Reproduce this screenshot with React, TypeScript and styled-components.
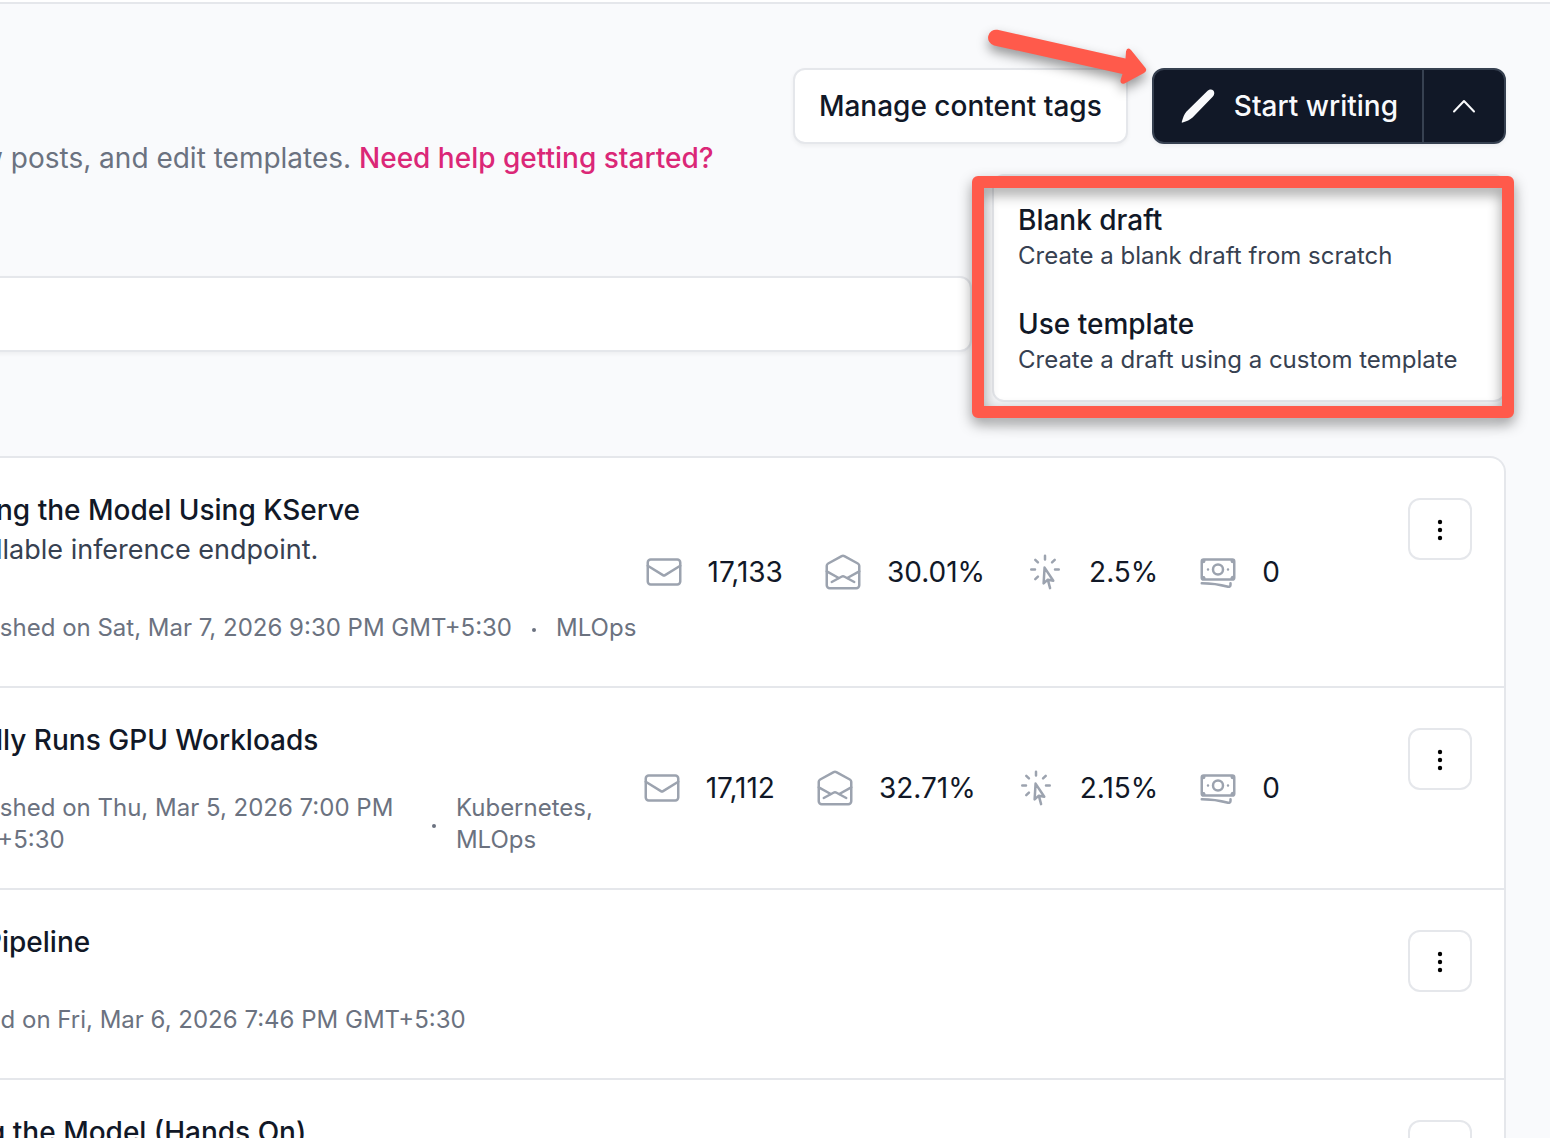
import React from "react";
import styled, { createGlobalStyle } from "styled-components";

const color = {
  canvas: "#f9fafc",
  surface: "#ffffff",
  line: "#e5e7eb",
  ink: "#111827",
  body: "#374151",
  muted: "#6b7280",
  icon: "#9ca3af",
  pink: "#db2777",
  marker: "#ff5a4b",
};

const GlobalStyle = createGlobalStyle`
  *, *::before, *::after { box-sizing: border-box; }
  body {
    margin: 0;
    background: ${color.canvas};
    color: ${color.ink};
    font-family: Inter, "Liberation Sans", sans-serif;
    font-size: 28px;
    line-height: 40px;
    -webkit-font-smoothing: antialiased;
  }
  button, input { font: inherit; color: inherit; }
`;

const Page = styled.div`
  height: 100vh;
  overflow: hidden;
`;

const TopBar = styled.div`
  height: 4px;
  background: ${color.surface};
  border-bottom: 2px solid ${color.line};
`;

const Main = styled.main`
  padding: 64px 44px 0 0;
`;

const Header = styled.header`
  display: flex;
  justify-content: space-between;
  align-items: flex-end;
`;

const Intro = styled.p<{ $cut: number }>`
  margin: 70px 0 0 -${(p) => p.$cut}px;
  color: ${color.muted};
  white-space: nowrap;
`;

const HelpLink = styled.a`
  color: ${color.pink};
  font-weight: 500;
  text-decoration: none;
`;

const Actions = styled.div`
  display: flex;
  align-self: flex-start;
  gap: 24px;
`;

const TagsButton = styled.button`
  height: 76px;
  padding: 0 24px;
  border: 2px solid ${color.line};
  border-radius: 12px;
  background: ${color.surface};
  font-weight: 500;
  white-space: nowrap;
  box-shadow: 0 2px 4px rgba(0, 0, 0, 0.05);
`;

const SplitButton = styled.div`
  position: relative;
  display: flex;
  height: 76px;
  border: 2px solid ${color.body};
  border-radius: 12px;
  background: ${color.ink};
  color: ${color.canvas};
  box-shadow: 0 2px 4px rgba(0, 0, 0, 0.05);
`;

const WriteButton = styled.button`
  display: flex;
  align-items: center;
  gap: 16px;
  padding: 0 24px;
  border: 0;
  background: transparent;
  font-weight: 500;
  white-space: nowrap;
`;

const ToggleButton = styled.button`
  display: flex;
  align-items: center;
  justify-content: center;
  width: 82px;
  padding: 0;
  border: 0;
  border-left: 2px solid ${color.body};
  background: transparent;
`;

const Menu = styled.div`
  position: absolute;
  z-index: 1;
  top: 104px;
  right: -2px;
  width: 514px;
  padding: 8px 0;
  border: 2px solid ${color.line};
  border-radius: 12px;
  background: ${color.surface};
  box-shadow: 0 16px 32px rgba(0, 0, 0, 0.04);
`;

const MenuItem = styled.button`
  display: block;
  width: 100%;
  padding: 16px 24px;
  border: 0;
  background: transparent;
  color: ${color.ink};
  text-align: left;
`;

const MenuTitle = styled.span`
  display: block;
  font-weight: 500;
`;

const MenuText = styled.span`
  display: block;
  color: ${color.body};
  font-size: 24px;
  line-height: 32px;
  white-space: nowrap;
`;

const Frame = styled.div`
  position: absolute;
  z-index: 2;
  top: 106px;
  right: -10px;
  width: 542px;
  height: 242px;
  border: 12px solid ${color.marker};
  border-radius: 6px;
  filter: drop-shadow(0 6px 7px rgba(0, 0, 0, 0.4));
  pointer-events: none;
`;

const Arrow = styled.svg`
  position: absolute;
  z-index: 2;
  top: -50px;
  left: -174px;
  overflow: visible;
  filter: drop-shadow(0 6px 6px rgba(0, 0, 0, 0.4));
  pointer-events: none;
`;

const Filters = styled.div`
  display: grid;
  grid-template-columns: minmax(0, 1fr) 510px;
  gap: 24px;
  margin: 98px 0 104px -16px;
`;

const Search = styled.input`
  width: 100%;
  height: 76px;
  padding: 0 24px;
  border: 2px solid ${color.line};
  border-radius: 12px;
  background: ${color.surface};
  box-shadow: 0 2px 4px rgba(0, 0, 0, 0.05);
`;

const PostList = styled.section`
  border: 2px solid ${color.line};
  border-left: 0;
  border-radius: 0 16px 0 0;
  background: ${color.surface};
`;

const Row = styled.article`
  display: flex;
  align-items: center;
  padding: 32px 32px 32px 0;
  border-bottom: 2px solid ${color.line};
`;

const Content = styled.div`
  flex: 1 1 0;
  min-width: 0;
`;

const Title = styled.h2<{ $cut: number }>`
  margin: 0 0 0 -${(p) => p.$cut}px;
  font-size: 28px;
  font-weight: 500;
  line-height: 40px;
  white-space: nowrap;
`;

const Subtitle = styled.p`
  margin: 0 0 0 -4px;
  color: ${color.body};
  font-size: 27px;
  white-space: nowrap;
`;

const Meta = styled.div`
  display: flex;
  align-items: center;
  gap: 20px;
  min-height: 52px;
  margin: 32px 0 0 -56px;
  color: ${color.muted};
  font-size: 24px;
  line-height: 32px;
`;

const Dot = styled.span`
  flex: none;
  width: 4px;
  height: 4px;
  margin-top: 4px;
  border-radius: 50%;
  background: ${color.muted};
`;

const Stats = styled.ul`
  display: flex;
  flex: none;
  gap: 40px;
  margin: 0 128px 0 4px;
  padding: 0;
  list-style: none;
`;

const Stat = styled.li`
  display: flex;
  align-items: center;
  gap: 24px;
`;

const MoreButton = styled.button`
  display: flex;
  flex: none;
  align-items: center;
  justify-content: center;
  align-self: flex-start;
  width: 64px;
  height: 62px;
  margin: 8px 0 0;
  padding: 0;
  border: 2px solid ${color.line};
  border-radius: 12px;
  background: ${color.surface};
`;

const iconPaths = {
  sent: [
    "M4 4.5h16a1.75 1.75 0 0 1 1.75 1.75v11.5A1.75 1.75 0 0 1 20 19.5H4a1.75 1.75 0 0 1-1.75-1.75V6.25A1.75 1.75 0 0 1 4 4.5z",
    "M2.25 8.25l9.1 5.6c.4.24.9.24 1.3 0l9.1-5.6",
  ],
  opened: [
    "M2.25 8.3c0-.6.3-1.1.85-1.4l8.1-4.4c.5-.27 1.1-.27 1.6 0l8.1 4.4c.55.3.85.8.85 1.4v11.7a1.75 1.75 0 0 1-1.75 1.75H4A1.75 1.75 0 0 1 2.25 20z",
    "M2.25 11.6l7.2 4M21.75 11.6l-7.2 4",
    "M5.25 18l5.8-3.15c.6-.32 1.3-.32 1.9 0L18.75 18",
  ],
  clicks: [
    "M15.042 21.672L13.684 16.6m0 0l-2.51 2.225.569-9.47 5.227 7.917-3.286-.672zM12 2.25V4.5m5.834.166l-1.591 1.591M20.25 10.5H18M7.757 14.743l-1.59 1.59M6 10.5H3.75m4.007-4.243l-1.59-1.59",
  ],
  revenue: [
    "M2.25 18.75a60.07 60.07 0 0 1 15.797 2.101c.727.198 1.453-.342 1.453-1.096V18.75M3.75 4.5v.75A.75.75 0 0 1 3 6h-.75m0 0v-.375c0-.621.504-1.125 1.125-1.125H20.25M2.25 6v9m18-10.5v.75c0 .414.336.75.75.75h.75m-1.5-1.5h.375c.621 0 1.125.504 1.125 1.125v9.75c0 .621-.504 1.125-1.125 1.125h-.375m1.5-1.5H21a.75.75 0 0 0-.75.75v.75m0 0H3.75m0 0h-.375a1.125 1.125 0 0 1-1.125-1.125V15m1.5 1.5v-.75A.75.75 0 0 0 3 15h-.75M15 10.5a3 3 0 1 1-6 0 3 3 0 0 1 6 0zm3 0h.008v.008H18V10.5zm-12 0h.008v.008H6V10.5z",
  ],
};

type IconName = keyof typeof iconPaths;

function StatIcon({ name }: { name: IconName }) {
  return (
    <svg
      width="40"
      height="40"
      viewBox="0 0 24 24"
      fill="none"
      stroke={color.icon}
      strokeWidth="1.5"
      strokeLinecap="round"
      strokeLinejoin="round"
      role="img"
      aria-label={name}
    >
      {iconPaths[name].map((d) => (
        <path key={d} d={d} />
      ))}
    </svg>
  );
}

interface Post {
  title: string;
  cut: number;
  subtitle?: string;
  date?: string;
  tags?: string;
  stats?: [IconName, string][];
}

const posts: Post[] = [
  {
    title: "ng the Model Using KServe",
    cut: 4,
    subtitle: "llable inference endpoint.",
    date: "Published on Sat, Mar 7, 2026 9:30 PM GMT+5:30",
    tags: "MLOps",
    stats: [
      ["sent", "17,133"],
      ["opened", "30.01%"],
      ["clicks", "2.5%"],
      ["revenue", "0"],
    ],
  },
  {
    title: "lly Runs GPU Workloads",
    cut: 4,
    date: "Published on Thu, Mar 5, 2026 7:00 PM GMT+5:30",
    tags: "Kubernetes, MLOps",
    stats: [
      ["sent", "17,112"],
      ["opened", "32.71%"],
      ["clicks", "2.15%"],
      ["revenue", "0"],
    ],
  },
  {
    title: "Pipeline",
    cut: 16,
    date: "Edited on Fri, Mar 6, 2026 7:46 PM GMT+5:30",
  },
  { title: "g the Model (Hands On)", cut: 12 },
];

function PostRow({ post }: { post: Post }) {
  return (
    <Row>
      <Content>
        <Title $cut={post.cut}>{post.title}</Title>
        {post.subtitle && <Subtitle>{post.subtitle}</Subtitle>}
        <Meta>
          {post.date && <span>{post.date}</span>}
          {post.tags && (
            <>
              <Dot />
              <span>{post.tags}</span>
            </>
          )}
        </Meta>
      </Content>
      {post.stats && (
        <Stats>
          {post.stats.map(([name, value]) => (
            <Stat key={name}>
              <StatIcon name={name} />
              <span>{value}</span>
            </Stat>
          ))}
        </Stats>
      )}
      <MoreButton aria-label="More actions">
        <svg width="24" height="24" viewBox="0 0 24 24" fill="#000">
          <circle cx="12" cy="5" r="2.2" />
          <circle cx="12" cy="13" r="2.2" />
          <circle cx="12" cy="21" r="2.2" />
        </svg>
      </MoreButton>
    </Row>
  );
}

export default function App() {
  return (
    <Page>
      <GlobalStyle />
      <TopBar />
      <Main>
        <Header>
          <Intro $cut={20}>
            w posts, and edit templates. <HelpLink href="#help">Need help getting started?</HelpLink>
          </Intro>
          <Actions>
            <TagsButton>Manage content tags</TagsButton>
            <SplitButton>
              <WriteButton>
                <svg width="40" height="40" viewBox="0 0 40 40" fill="currentColor">
                  <path d="M4.6 36.6c-.5.2-1-.3-.8-.9 1.3-4.200 2.400-7.400 4.500-9.900L29.100 5.200c1.900-1.900 4.700-2.100 6.200-.6s1.300 4.300-.6 6.200L14.600 31.500c-2.600 2.300-5.800 3.700-10 5.100z" />
                </svg>
                Start writing
              </WriteButton>
              <ToggleButton aria-label="Toggle writing options" aria-expanded="true">
                <svg width="24" height="24" viewBox="0 0 24 24" fill="none" stroke="currentColor" strokeWidth="2" strokeLinecap="round" strokeLinejoin="round">
                  <path d="M2 17.5L12 7l10 10.5" />
                </svg>
              </ToggleButton>
              <Menu>
                <MenuItem>
                  <MenuTitle>Blank draft</MenuTitle>
                  <MenuText>Create a blank draft from scratch</MenuText>
                </MenuItem>
                <MenuItem>
                  <MenuTitle>Use template</MenuTitle>
                  <MenuText>Create a draft using a custom template</MenuText>
                </MenuItem>
              </Menu>
              <Frame />
              <Arrow width="170" height="70" viewBox="980 20 170 70" fill={color.marker}>
                <path d="M997.5 29.8L1125.5 58.4L1126 51.5Q1127 46.5 1131 50L1145.5 68Q1147.5 71 1144 73L1124.5 83.5Q1119.5 85 1120.7 79.5L1122.5 74L994 45.4A8 8 0 0 1 997.5 29.8Z" />
              </Arrow>
            </SplitButton>
          </Actions>
        </Header>
        <Filters>
          <Search type="search" aria-label="Search posts" />
        </Filters>
        <PostList>
          {posts.map((post) => (
            <PostRow key={post.title} post={post} />
          ))}
        </PostList>
      </Main>
    </Page>
  );
}
